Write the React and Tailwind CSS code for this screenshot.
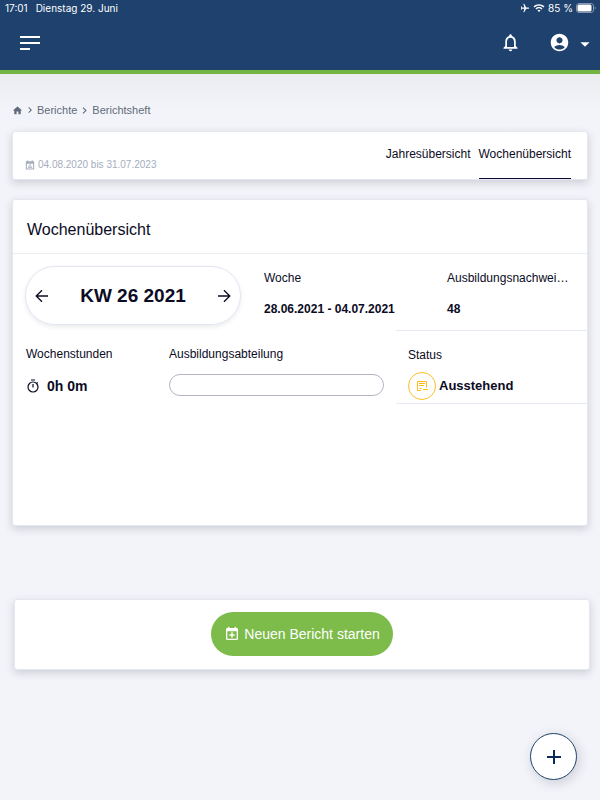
import {
  MdAccountCircle,
  MdAdd,
  MdAirplanemodeActive,
  MdArrowDropDown,
  MdChevronRight,
  MdHome,
  MdOutlineNotifications,
  MdWifi,
} from "react-icons/md";

const cardClass =
  "rounded-[3px] border border-[#e4e6f0] bg-white shadow-[0_3px_8px_rgba(50,55,80,0.2)]";

// Calendar with a plus sign, used by the start button
const CalendarPlusIcon = () => (
  <svg className="size-4" viewBox="0 0 24 24" fill="currentColor" aria-hidden="true">
    <path d="M19 19V8H5v11h14M16 1h2v2h1a2 2 0 0 1 2 2v14a2 2 0 0 1-2 2H5a2 2 0 0 1-2-2V5a2 2 0 0 1 2-2h1V1h2v2h8V1m-5 8.5h2v3h3v2h-3v3h-2v-3H8v-2h3v-3z" />
  </svg>
);

const CalendarRangeIcon = () => (
  <svg className="size-[10px]" viewBox="0 0 24 24" fill="currentColor" aria-hidden="true">
    <path
      fillRule="evenodd"
      d="M5 1h3v2h8V1h3v2h3v20H2V3h3V1zM4.500 9v11.500h15V9h-15zm5.500 1.500h4v3.500h-4v-3.500zm-3 5h10v3H7v-3z"
    />
  </svg>
);

const ReportIcon = () => (
  <svg
    className="size-3"
    viewBox="0 0 12 12"
    fill="none"
    stroke="currentColor"
    aria-hidden="true"
  >
    <path d="M5 10.500H1.5V1.5h9V7.500" />
    <path d="M3 3.500h6M3 5.500h5M3.500 8.500h2M7 9.500h5" />
  </svg>
);

const ArrowIcon = ({ className }) => (
  <svg
    className={`size-[14px] ${className}`}
    viewBox="0 0 14 14"
    fill="none"
    stroke="currentColor"
    strokeWidth="1.3"
    aria-hidden="true"
  >
    <path d="M1 7h11.500M7 1.200 12.800 7 7 12.800" />
  </svg>
);

const TimerIcon = () => (
  <svg
    className="size-[14px]"
    viewBox="0 0 14 14"
    fill="none"
    stroke="currentColor"
    strokeWidth="1.2"
    aria-hidden="true"
  >
    <circle cx="7" cy="8" r="5" />
    <path d="M5 1h4M7 5v3.500M10.700 4.300l1-1" />
  </svg>
);

const StatusBar = () => (
  <div className="flex h-4 items-center justify-between pl-[5px] pr-1 font-[Inter,sans-serif] text-[10px] leading-4">
    <div className="flex gap-2">
      <span>17:01</span>
      <span>Dienstag 29. Juni</span>
    </div>
    <div className="flex items-center gap-[3px]">
      <MdAirplanemodeActive className="size-[10px] rotate-90" />
      <MdWifi className="size-3" />
      <span>85 %</span>
      <svg className="h-[10px] w-5" viewBox="0 0 20 10" aria-hidden="true">
        <rect x="0.5" y="0.5" width="17" height="9" rx="2.5" fill="none" stroke="#8395b0" />
        <rect x="1.5" y="1.5" width="14" height="7" rx="1.5" fill="white" />
        <path d="M18.7 3.3v3.4c1.3-.5 1.3-2.9 0-3.4z" fill="#8395b0" />
      </svg>
    </div>
  </div>
);

const Header = () => (
  <header className="h-[74px] border-b-4 border-[#73b543] bg-[#1e416d] text-white">
    <StatusBar />
    <div className="flex h-[53px] items-center justify-between pl-5 pr-1">
      <button type="button" aria-label="Menü">
        <svg className="h-[14px] w-5" viewBox="0 0 20 14" fill="currentColor" aria-hidden="true">
          <path d="M0 0h20v2H0zM0 6h20v2H0zM0 12h10v2H0z" />
        </svg>
      </button>
      <div className="flex items-center">
        <button type="button" aria-label="Benachrichtigungen" className="mr-7">
          <MdOutlineNotifications className="size-[21px]" />
        </button>
        <button type="button" aria-label="Konto" className="flex items-center gap-1">
          <MdAccountCircle className="size-[21px]" />
          <MdArrowDropDown className="mt-0.5 size-[22px]" />
        </button>
      </div>
    </div>
  </header>
);

const Breadcrumb = () => (
  <nav aria-label="Brotkrumen" className="flex h-5 items-center text-[11px] text-[#5f6b7a]">
    <a href="#start" aria-label="Start">
      <MdHome className="size-[11px]" />
    </a>
    <MdChevronRight className="mx-px size-3" />
    <a href="#berichte">Berichte</a>
    <MdChevronRight className="mx-px size-[13px]" />
    <a href="#berichtsheft">Berichtsheft</a>
  </nav>
);

const Field = ({ label, children }) => (
  <div className="px-3">
    <div className="whitespace-nowrap leading-4">{label}</div>
    <div className="mt-[15px] whitespace-nowrap font-bold leading-4">{children}</div>
  </div>
);

const WeekPicker = () => (
  <div className="ml-3 mr-[11px] flex h-[59px] items-center justify-between rounded-full border border-[#e1e5f2] px-[9px] shadow-[0_2px_4px_rgba(50,55,80,0.1)]">
    <button type="button" aria-label="Vorherige Woche">
      <ArrowIcon className="rotate-180" />
    </button>
    <span className="text-[19px] font-bold leading-6">KW 26 2021</span>
    <button type="button" aria-label="Nächste Woche">
      <ArrowIcon />
    </button>
  </div>
);

const App = () => {
  return (
    <div className="min-h-screen bg-[#f3f4f9] font-['Liberation_Sans',Arial,sans-serif] text-xs text-[#0b0b24]">
      <Header />
      <main className="bg-linear-to-b from-[#ebecf0] to-[#f3f4f9] to-[36px] px-3 pt-[26px]">
        <Breadcrumb />

        <section className={`${cardClass} mt-[11px] flex h-[49px] justify-between pl-3 pr-4`}>
          <div className="mb-2 flex items-center gap-[3px] self-end text-[10px] leading-3 text-[#a4adbd]">
            <CalendarRangeIcon />
            04.08.2020 bis 31.07.2023
          </div>
          <nav className="flex gap-2 leading-[45px]">
            <a href="#jahr">Jahresübersicht</a>
            <a href="#woche" className="border-b border-[#0b0b34]">
              Wochenübersicht
            </a>
          </nav>
        </section>

        <section className={`${cardClass} mt-[19px] min-h-[327px]`}>
          <h1 className="border-b border-[#eceef3] px-[14px] pb-[11px] pt-[18px] text-base leading-6">
            Wochenübersicht
          </h1>
          <div className="grid h-[76px] grid-cols-[239fr_183fr_152fr] pt-3">
            <WeekPicker />
            <div className="pt-1">
              <Field label="Woche">28.06.2021 - 04.07.2021</Field>
            </div>
            <div className="pt-1">
              <Field label="Ausbildungsnachwei…">48</Field>
            </div>
          </div>
          <div className="grid grid-cols-[144fr_239fr_191fr]">
            <div className="px-[13px] pt-4">
              <div className="leading-4">Wochenstunden</div>
              <div className="mt-4 flex items-center gap-[7px] text-sm font-bold leading-4">
                <TimerIcon />
                0h 0m
              </div>
            </div>
            <div className="px-3 pt-4">
              <label htmlFor="abteilung" className="block leading-4">
                Ausbildungsabteilung
              </label>
              <input
                id="abteilung"
                type="text"
                className="mt-3 block h-[22px] w-full rounded-full border border-[#b3b5c3] px-3"
              />
            </div>
            <div className="h-[74px] border-y border-[#e6e9f3] px-3 pt-4">
              <div className="leading-4">Status</div>
              <div className="mt-2 flex items-center gap-[3px] text-[13px] font-bold leading-[30px]">
                <span className="flex size-7 items-center justify-center rounded-full border border-[#fbbf24] text-[#fbb91a]">
                  <ReportIcon />
                </span>
                Ausstehend
              </div>
            </div>
          </div>
        </section>

        <section
          className={`${cardClass} -mr-0.5 ml-0.5 mt-[73px] flex h-[71px] justify-center pt-3`}
        >
          <button
            type="button"
            className="flex h-11 items-center gap-1 rounded-full bg-[#7dbb4b] px-[13px] text-sm text-white"
          >
            <CalendarPlusIcon />
            Neuen Bericht starten
          </button>
        </section>
      </main>

      <button
        type="button"
        aria-label="Hinzufügen"
        className="fixed bottom-5 right-[23px] flex size-[47px] items-center justify-center rounded-full border border-[#1e416d] bg-white text-[#0b2a5c] shadow-[2px_3px_12px_rgba(50,55,80,0.2)]"
      >
        <MdAdd className="size-6" />
      </button>
    </div>
  );
};

export default App;
